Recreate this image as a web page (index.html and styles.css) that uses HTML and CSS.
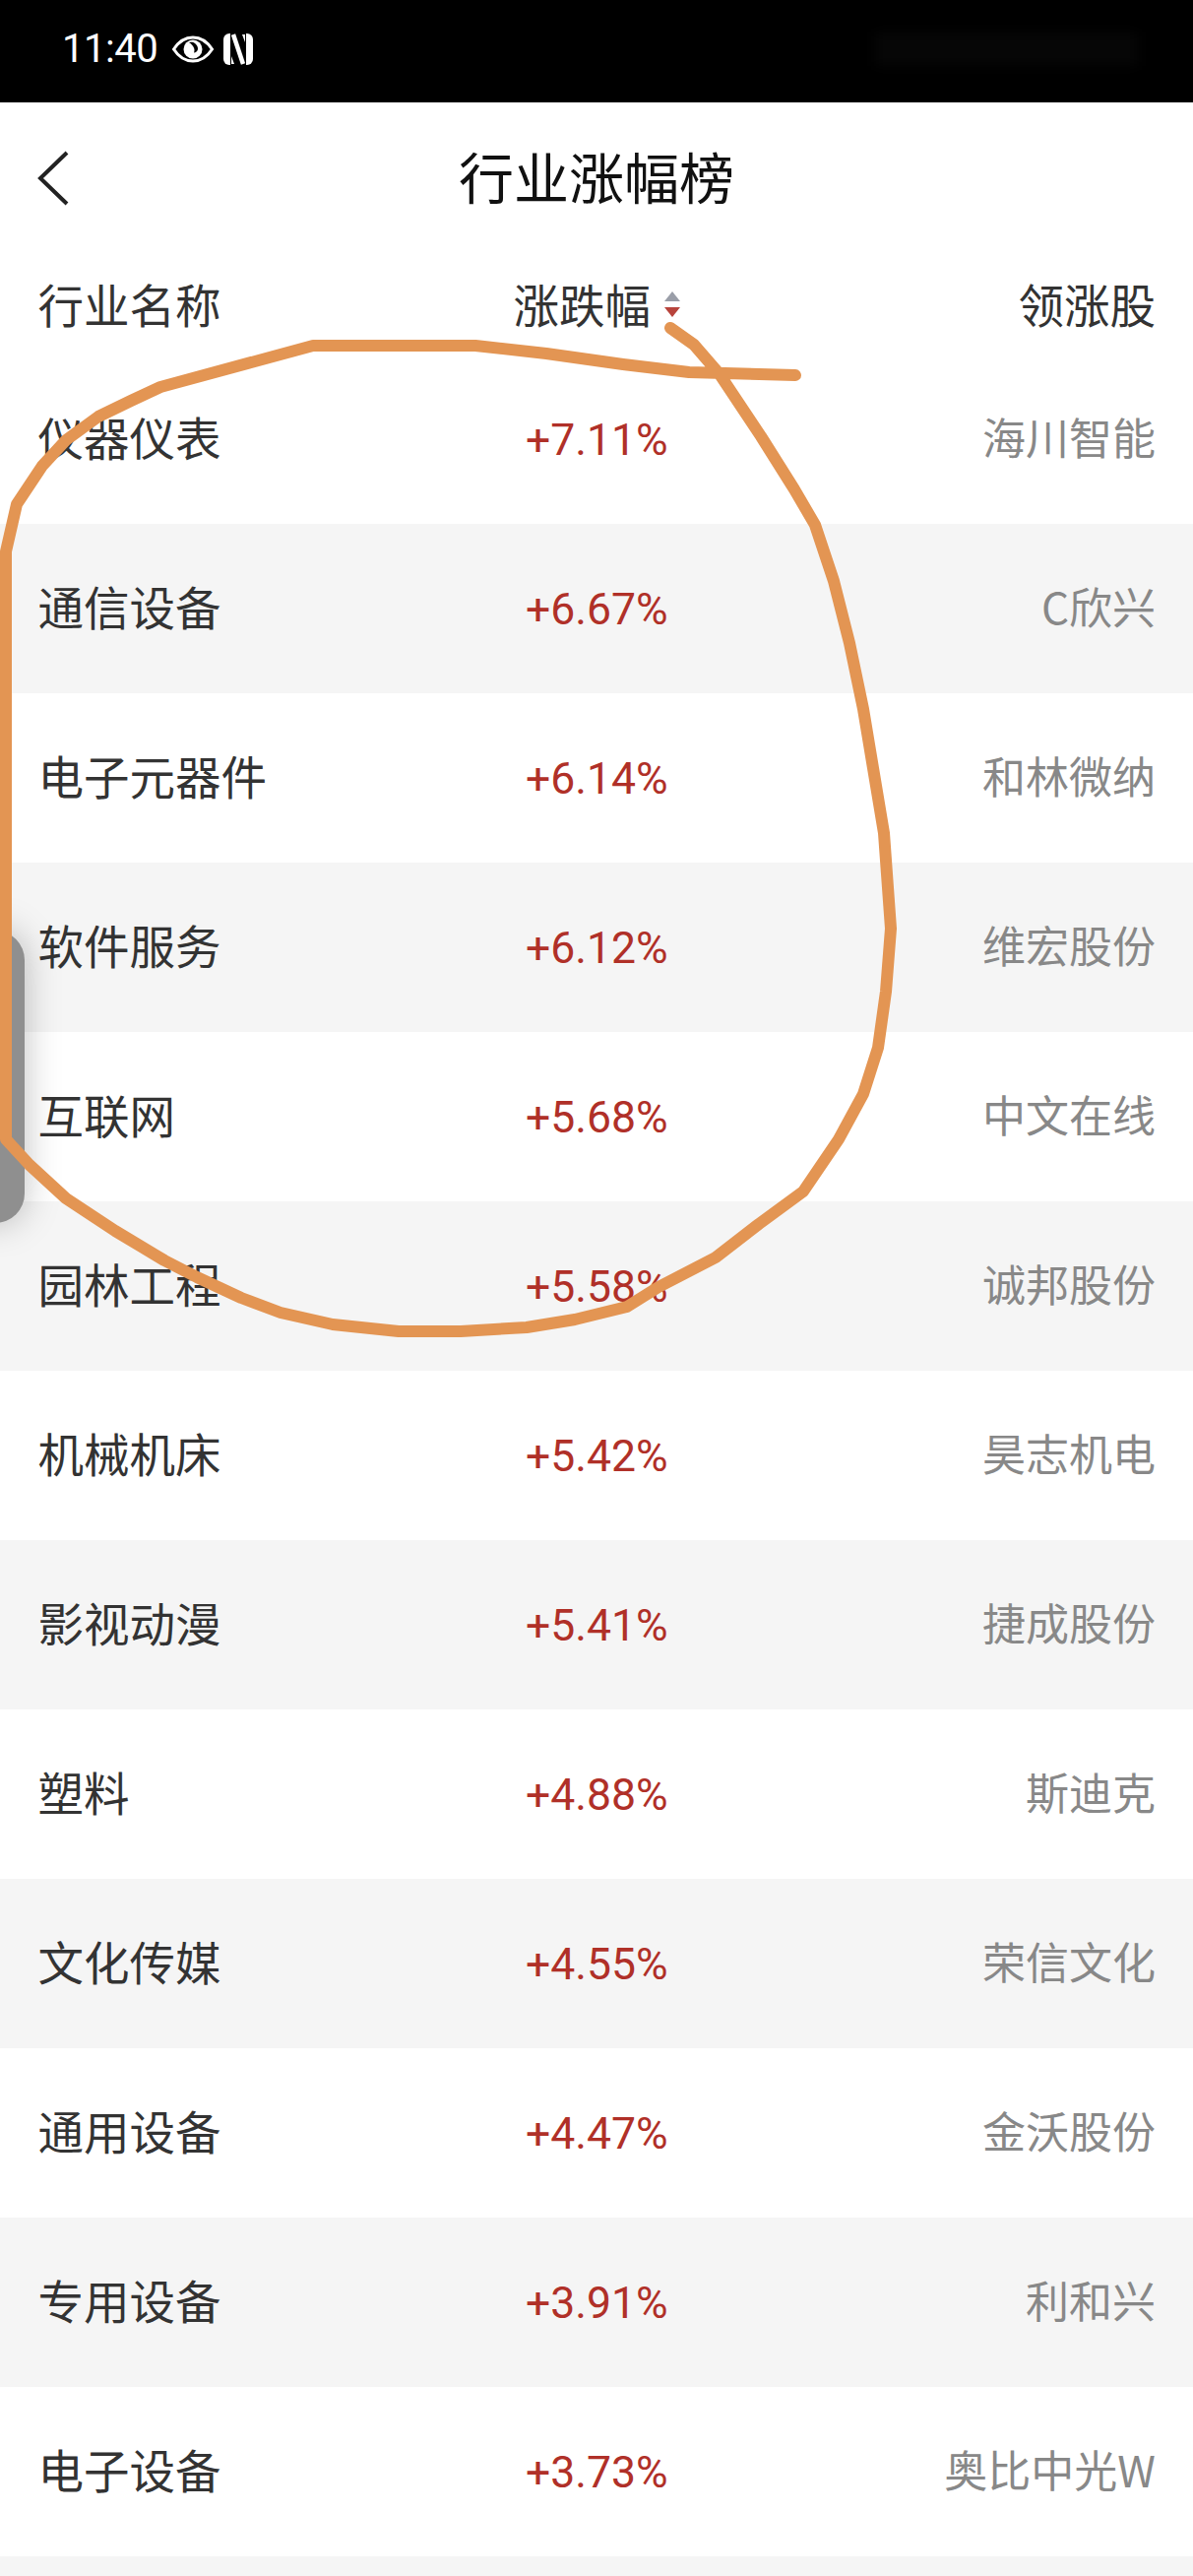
FILE: index.html
```html
<!DOCTYPE html>
<html>
<head>
    <meta charset="utf-8">
    <link rel="stylesheet" href="styles.css">
    <title>行业涨幅榜</title>
</head>
<body>
    <div class="status-bar">
        <span class="time">11:40</span>
        <svg class="eye" width="42" height="28" viewBox="0 0 42 28">
            <path d="M1.500 14C7 5.500 13.500 2 21 2s14 3.500 19.500 12C35 22.500 28.500 26 21 26S7 22.500 1.500 14Z" fill="none" stroke="#fff" stroke-width="3"/>
            <circle cx="21" cy="14" r="9.500" fill="#fff"/>
            <path d="M17 7a7 7 0 0 1 9 7c-.5 2-2 3.500-4 3.500 1.500-3 0-7-5-10.500Z" fill="#000"/>
        </svg>
        <svg class="nfc" width="30" height="32" viewBox="0 0 30 32">
            <rect x="0" y="0" width="30" height="32" rx="6" fill="#fff"/>
            <rect x="7" y="0" width="16" height="32" fill="#000"/>
            <path d="M10 1l10 30" stroke="#fff" stroke-width="4.500"/>
            <path d="M19 1h3v8zM11 31H8v-8z" fill="#fff"/>
        </svg>
        <div class="hidden-icons"></div>
    </div>

    <div class="nav">
        <svg class="back" width="36" height="60" viewBox="0 0 36 60">
            <path d="M32 4L5 30l27 26" fill="none" stroke="#222" stroke-width="4"/>
        </svg>
        <div class="page-title">行业涨幅榜</div>
    </div>

    <div class="row head">
        <div>行业名称</div>
        <div class="sort">
            涨跌幅
            <span class="arrows">
                <i class="arrow-up"></i>
                <i class="arrow-down"></i>
            </span>
        </div>
        <div class="head-right">领涨股</div>
    </div>

    <div class="row"><div class="name">仪器仪表</div><div class="pct">+7.11%</div><div class="stock">海川智能</div></div>
    <div class="row"><div class="name">通信设备</div><div class="pct">+6.67%</div><div class="stock">C欣兴</div></div>
    <div class="row"><div class="name">电子元器件</div><div class="pct">+6.14%</div><div class="stock">和林微纳</div></div>
    <div class="row"><div class="name">软件服务</div><div class="pct">+6.12%</div><div class="stock">维宏股份</div></div>
    <div class="row"><div class="name">互联网</div><div class="pct">+5.68%</div><div class="stock">中文在线</div></div>
    <div class="row"><div class="name">园林工程</div><div class="pct">+5.58%</div><div class="stock">诚邦股份</div></div>
    <div class="row"><div class="name">机械机床</div><div class="pct">+5.42%</div><div class="stock">昊志机电</div></div>
    <div class="row"><div class="name">影视动漫</div><div class="pct">+5.41%</div><div class="stock">捷成股份</div></div>
    <div class="row"><div class="name">塑料</div><div class="pct">+4.88%</div><div class="stock">斯迪克</div></div>
    <div class="row"><div class="name">文化传媒</div><div class="pct">+4.55%</div><div class="stock">荣信文化</div></div>
    <div class="row"><div class="name">通用设备</div><div class="pct">+4.47%</div><div class="stock">金沃股份</div></div>
    <div class="row"><div class="name">专用设备</div><div class="pct">+3.91%</div><div class="stock">利和兴</div></div>
    <div class="row"><div class="name">电子设备</div><div class="pct">+3.73%</div><div class="stock">奥比中光W</div></div>
    <div class="row tail"></div>

    <!-- side handle and the hand drawn circle lie over the list -->
    <div class="side-tab"></div>
    <svg class="scribble" width="1212" height="2616" viewBox="0 0 1212 2616">
        <path d="M681 333L705 350L731 380L743 398L773 443L807 497L828 533L847 590L863 653L877 720L887 780L898 846L905 943L900 1007L892 1064L877 1111L852 1157L816 1210L771 1243L727 1277L669 1307L637 1327L584 1340L535 1348L468 1352L405 1352L338 1345L285 1333L245 1318L200 1297L167 1280L117 1250L67 1217L30 1183L6 1157L6 560L17 512L43 473L67 447L100 423L133 407L163 393L318 351L400 351L483 351L555 359L633 370L700 378L808 381"
              fill="none" stroke="#e39553" stroke-width="12" stroke-linecap="round" stroke-linejoin="round"/>
    </svg>
</body>
</html>
```

FILE: styles.css
```css
html, body {
    margin: 0;
    height: 2616px;
    overflow: hidden;
}
body {
    position: relative;
    background-color: #fff;
    font-family: "Noto Sans CJK SC", "Noto Sans", sans-serif;
    color: #333;
}
.status-bar {
    height: 104px;
    background-color: #000;
    display: flex;
    align-items: center;
    padding-left: 63px;
    box-sizing: border-box;
    color: #fff;
    padding-bottom: 4px;
}
.time {
    font-family: Roboto, sans-serif;
    font-size: 40px;
    letter-spacing: -0.5px;
    line-height: 1;
}
.eye {
    margin-left: 15px;
}
.nfc {
    margin-left: 10px;
}
.hidden-icons {
    margin-left: auto;
    margin-right: 56px;
    width: 267px;
    height: 34px;
    background-color: #060606;
    filter: blur(6px);
}
.nav {
    height: 156px;
    box-sizing: border-box;
    padding-bottom: 10px;
    display: flex;
    align-items: center;
    justify-content: center;
    position: relative;
}
.back {
    position: absolute;
    left: 36px;
    top: 47px;
}
.page-title {
    font-size: 56px;
    color: #111;
}
.row {
    height: 172px;
    box-sizing: border-box;
    padding: 0 38px 0 38.5px;
    display: grid;
    grid-template-columns: 1fr 1fr 1fr;
    align-items: center;
    font-size: 46.5px;
}
.row:nth-of-type(2n+1) {
    background-color: #f5f5f5;
}
.row.head {
    height: 100px;
    padding-bottom: 6px;
    background-color: #fff;
}
.row.tail {
    height: 20px;
}
.name {
    margin-bottom: 7px;
}
.sort {
    display: flex;
    justify-content: center;
    align-items: center;
    gap: 14px;
}
.arrows {
    display: flex;
    flex-direction: column;
    gap: 6px;
    margin-top: 4px;
}
.arrow-up {
    border-left: 8px solid transparent;
    border-right: 8px solid transparent;
    border-bottom: 10px solid #9a9ea8;
}
.arrow-down {
    border-left: 8px solid transparent;
    border-right: 8px solid transparent;
    border-top: 10px solid #b8443c;
}
.head-right {
    text-align: right;
}
.pct {
    font-family: Roboto, sans-serif;
    font-size: 44.5px;
    margin-top: 2px;
    text-align: center;
    color: #b03028;
}
.stock {
    font-size: 44px;
    margin-bottom: 7px;
    text-align: right;
    color: #888;
}
.side-tab {
    position: absolute;
    left: -40px;
    top: 945px;
    width: 65px;
    height: 297px;
    border-radius: 30px;
    background-color: #8f8f8f;
    box-shadow: 0 0 36px rgba(0, 0, 0, 0.25);
}
.scribble {
    position: absolute;
    left: 0;
    top: 0;
}
```
